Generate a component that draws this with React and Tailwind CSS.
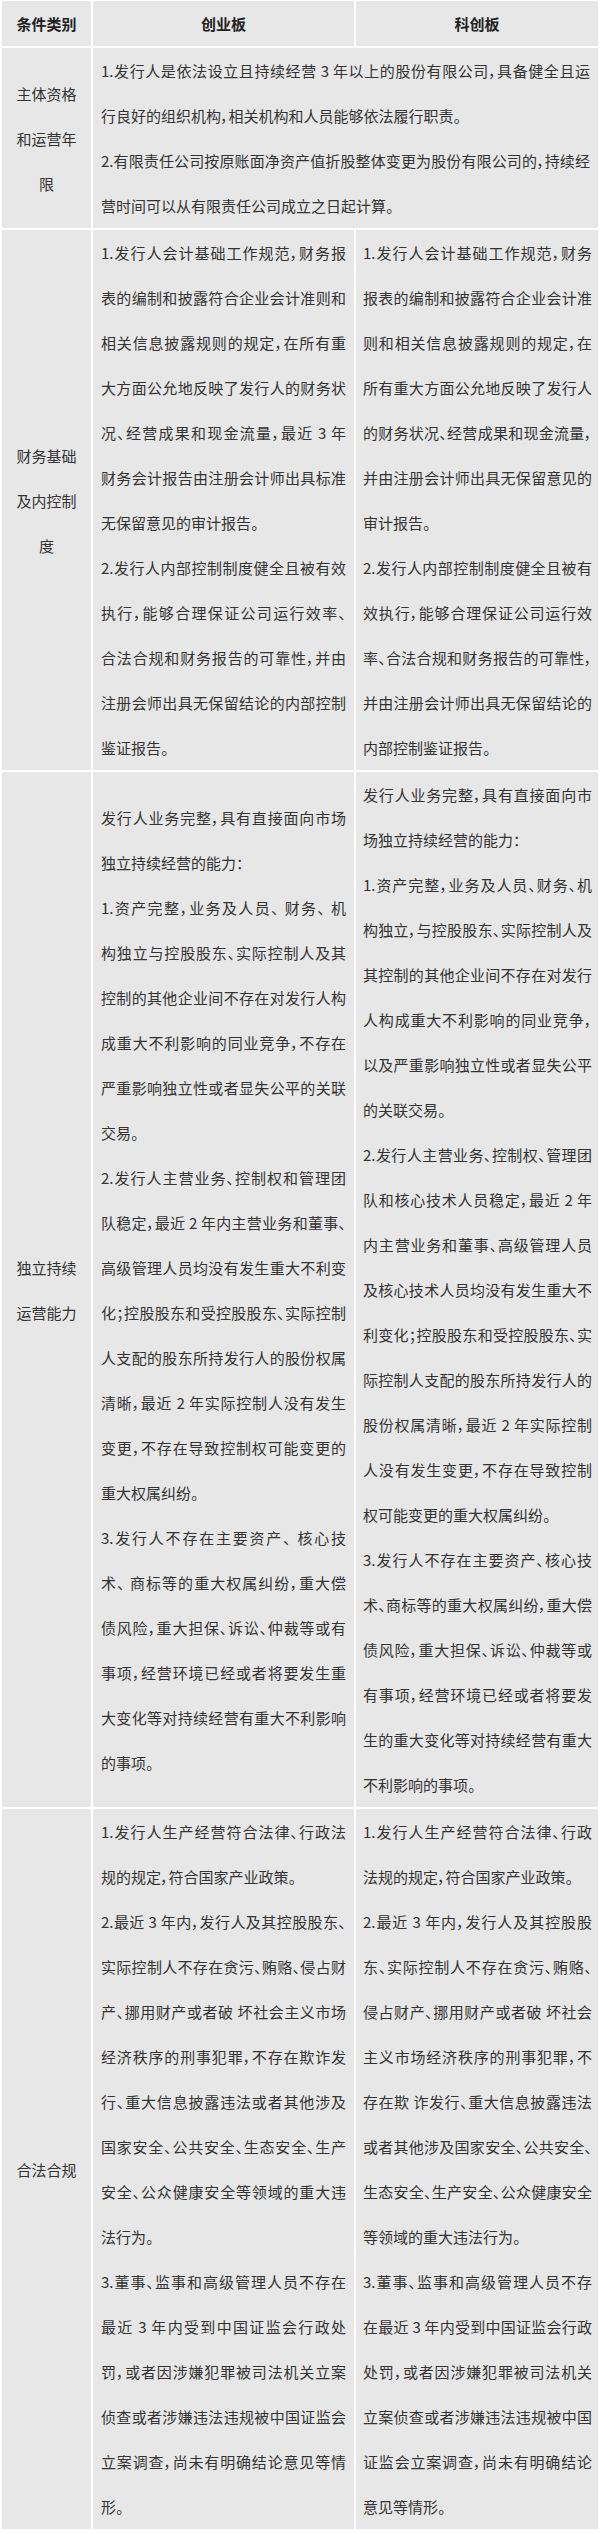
import React from "react";

const rows = [
  {
    label: ["主体资格", "和运营年", "限"],
    span: true,
    a: [
      [
        "1.发行人是依法设立且持续经营 3 年以上的股份有限公司，具备健全且运",
        "行良好的组织机构，相关机构和人员能够依法履行职责。",
      ],
      [
        "2.有限责任公司按原账面净资产值折股整体变更为股份有限公司的，持续经",
        "营时间可以从有限责任公司成立之日起计算。",
      ],
    ],
  },
  {
    label: ["财务基础", "及内控制", "度"],
    a: [
      [
        "1.发行人会计基础工作规范，财务报",
        "表的编制和披露符合企业会计准则和",
        "相关信息披露规则的规定，在所有重",
        "大方面公允地反映了发行人的财务状",
        "况、经营成果和现金流量，最近 3 年",
        "财务会计报告由注册会计师出具标准",
        "无保留意见的审计报告。",
      ],
      [
        "2.发行人内部控制制度健全且被有效",
        "执行，能够合理保证公司运行效率、",
        "合法合规和财务报告的可靠性，并由",
        "注册会师出具无保留结论的内部控制",
        "鉴证报告。",
      ],
    ],
    b: [
      [
        "1.发行人会计基础工作规范，财务",
        "报表的编制和披露符合企业会计准",
        "则和相关信息披露规则的规定，在",
        "所有重大方面公允地反映了发行人",
        "的财务状况、经营成果和现金流量，",
        "并由注册会计师出具无保留意见的",
        "审计报告。",
      ],
      [
        "2.发行人内部控制制度健全且被有",
        "效执行，能够合理保证公司运行效",
        "率、合法合规和财务报告的可靠性，",
        "并由注册会计师出具无保留结论的",
        "内部控制鉴证报告。",
      ],
    ],
  },
  {
    label: ["独立持续", "运营能力"],
    a: [
      ["发行人业务完整，具有直接面向市场", "独立持续经营的能力："],
      [
        "1.资产完整，业务及人员、 财务、 机",
        "构独立与控股股东、实际控制人及其",
        "控制的其他企业间不存在对发行人构",
        "成重大不利影响的同业竞争，不存在",
        "严重影响独立性或者显失公平的关联",
        "交易。",
      ],
      [
        "2.发行人主营业务、控制权和管理团",
        "队稳定，最近 2 年内主营业务和董事、",
        "高级管理人员均没有发生重大不利变",
        "化；控股股东和受控股股东、实际控制",
        "人支配的股东所持发行人的股份权属",
        "清晰，最近 2 年实际控制人没有发生",
        "变更，不存在导致控制权可能变更的",
        "重大权属纠纷。",
      ],
      [
        "3.发行人不存在主要资产、 核心技",
        "术、 商标等的重大权属纠纷，重大偿",
        "债风险，重大担保、诉讼、仲裁等或有",
        "事项，经营环境已经或者将要发生重",
        "大变化等对持续经营有重大不利影响",
        "的事项。",
      ],
    ],
    b: [
      ["发行人业务完整，具有直接面向市", "场独立持续经营的能力："],
      [
        "1.资产完整，业务及人员、财务、机",
        "构独立，与控股股东、实际控制人及",
        "其控制的其他企业间不存在对发行",
        "人构成重大不利影响的同业竞争，",
        "以及严重影响独立性或者显失公平",
        "的关联交易。",
      ],
      [
        "2.发行人主营业务、控制权、管理团",
        "队和核心技术人员稳定，最近 2 年",
        "内主营业务和董事、高级管理人员",
        "及核心技术人员均没有发生重大不",
        "利变化；控股股东和受控股股东、实",
        "际控制人支配的股东所持发行人的",
        "股份权属清晰，最近 2 年实际控制",
        "人没有发生变更，不存在导致控制",
        "权可能变更的重大权属纠纷。",
      ],
      [
        "3.发行人不存在主要资产、核心技",
        "术、商标等的重大权属纠纷，重大偿",
        "债风险，重大担保、诉讼、仲裁等或",
        "有事项，经营环境已经或者将要发",
        "生的重大变化等对持续经营有重大",
        "不利影响的事项。",
      ],
    ],
  },
  {
    label: ["合法合规"],
    a: [
      ["1.发行人生产经营符合法律、行政法", "规的规定，符合国家产业政策。"],
      [
        "2.最近 3 年内，发行人及其控股股东、",
        "实际控制人不存在贪污、贿赂、侵占财",
        "产、挪用财产或者破 坏社会主义市场",
        "经济秩序的刑事犯罪，不存在欺诈发",
        "行、重大信息披露违法或者其他涉及",
        "国家安全、公共安全、生态安全、生产",
        "安全、公众健康安全等领域的重大违",
        "法行为。",
      ],
      [
        "3.董事、监事和高级管理人员不存在",
        "最近 3 年内受到中国证监会行政处",
        "罚，或者因涉嫌犯罪被司法机关立案",
        "侦查或者涉嫌违法违规被中国证监会",
        "立案调查，尚未有明确结论意见等情",
        "形。",
      ],
    ],
    b: [
      ["1.发行人生产经营符合法律、行政", "法规的规定，符合国家产业政策。"],
      [
        "2.最近 3 年内，发行人及其控股股",
        "东、实际控制人不存在贪污、贿赂、",
        "侵占财产、挪用财产或者破 坏社会",
        "主义市场经济秩序的刑事犯罪，不",
        "存在欺 诈发行、重大信息披露违法",
        "或者其他涉及国家安全、公共安全、",
        "生态安全、生产安全、公众健康安全",
        "等领域的重大违法行为。",
      ],
      [
        "3.董事、监事和高级管理人员不存",
        "在最近 3 年内受到中国证监会行政",
        "处罚，或者因涉嫌犯罪被司法机关",
        "立案侦查或者涉嫌违法违规被中国",
        "证监会立案调查，尚未有明确结论",
        "意见等情形。",
      ],
    ],
  },
];

function Paras({ paras }) {
  return (
    <div className="flex flex-col">
      {paras.map((p, i) => (
        <div key={i}>
          {p.map((line, j) =>
            j < p.length - 1 ? (
              <div key={j} className="h-[45px] text-justify [text-align-last:justify]">
                {line}
              </div>
            ) : (
              <div key={j} className="h-[45px] text-left">
                {line}
              </div>
            )
          )}
        </div>
      ))}
    </div>
  );
}

export default function App() {
  return (
    <div
      className="w-[600px] bg-white px-[2px] pt-[1px] pb-[5px] text-[15px] leading-[45px] text-[#333333] [font-feature-settings:'palt']"
      style={{ fontFamily: '"Noto Sans CJK SC", "Microsoft YaHei", sans-serif' }}
    >
      <div className="grid grid-cols-[89px_261px_242px] gap-[2px]">
        <div className="flex h-[45px] items-center justify-center bg-[#e7e7e7] font-bold text-[#222222]">
          条件类别
        </div>
        <div className="flex h-[45px] items-center justify-center bg-[#e7e7e7] font-bold text-[#222222]">
          创业板
        </div>
        <div className="flex h-[45px] items-center justify-center bg-[#e7e7e7] font-bold text-[#222222]">
          科创板
        </div>
        {rows.map((r, i) => (
          <React.Fragment key={i}>
            <div className="flex flex-col items-center justify-center bg-[#e7e7e7] text-center">
              {r.label.map((l, k) => (
                <div key={k} className="h-[45px]">
                  {l}
                </div>
              ))}
            </div>
            {r.span ? (
              <div className="col-span-2 flex flex-col justify-center bg-[#e7e7e7] px-[8px]">
                <Paras paras={r.a} />
              </div>
            ) : (
              <>
                <div className="flex flex-col justify-center bg-[#e7e7e7] px-[8px]">
                  <Paras paras={r.a} />
                </div>
                <div className="flex flex-col justify-center bg-[#e7e7e7] pl-[7px] pr-[6px]">
                  <Paras paras={r.b} />
                </div>
              </>
            )}
          </React.Fragment>
        ))}
      </div>
    </div>
  );
}
